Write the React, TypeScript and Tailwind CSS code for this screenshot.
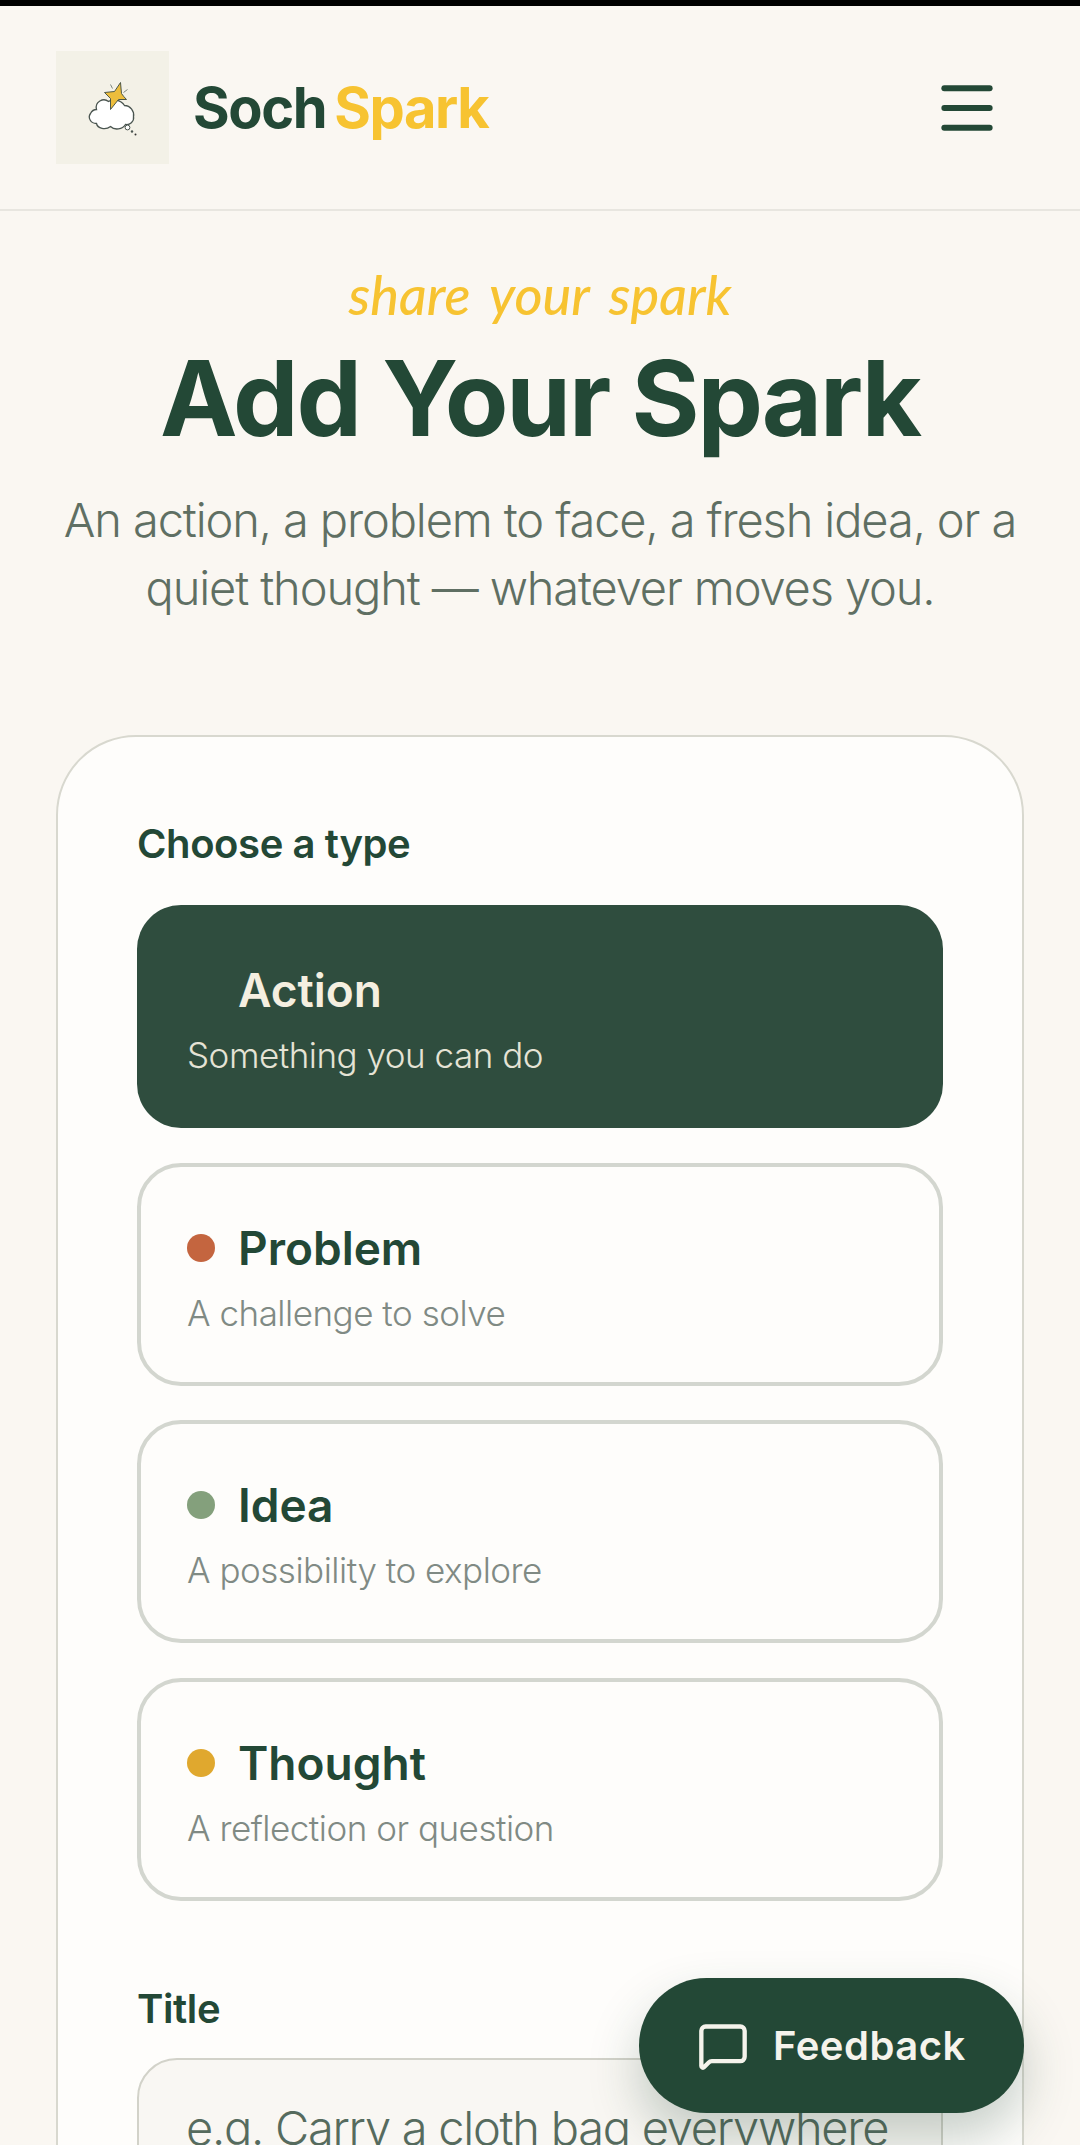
import { Menu, MessageSquare } from 'lucide-react';

const types = [
    { name: "Problem", hint: "A challenge to solve", dot: "bg-[#c4653f]" },
    { name: "Idea", hint: "A possibility to explore", dot: "bg-[#84a07c]" },
    { name: "Thought", hint: "A reflection or question", dot: "bg-[#e0a82e]" },
];

function Logo() {
    return (
        <div className="w-[113px] h-[113px] bg-[#f3f1e7] flex items-center justify-center shrink-0">
            <svg width="60" height="62" viewBox="82.5 75.5 60 62" fill="none">
                {/* cloud */}
                <path d="M96 108C94 100 103 96 108 100C112 97 120 98 124 104C130 104 134 110 133 115C134 120 129 124 125 123C122 128 114 129 110 125C105 129 97 127 96 122C90 122 87 116 90 112C91 110 93 108 96 108Z" fill="#fff" stroke="#4a5550" strokeWidth="1.3" />
                {/* star */}
                <path d="M120 81L121 92Q123 95 126 98L118 98L110 108L110 97L104 91L114 90Z" fill="#ecbd3c" stroke="#3b4a40" strokeWidth="0.9" strokeLinejoin="round" />
                <path d="M110 83l2 4M127 88l-4 3" stroke="#6f7a72" strokeWidth="0.9" />
                <circle cx="127" cy="126" r="2.4" fill="#fff" stroke="#4a5550" strokeWidth="1" />
                <circle cx="131.5" cy="130" r="1.2" fill="#4a5550" />
                <circle cx="135" cy="133" r="1" fill="#333" />
            </svg>
        </div>
    );
}

export default function App() {
    return (
        <div className="relative h-[2145px] overflow-hidden bg-[#faf7f2] font-['Inter',sans-serif] text-[#234836]">
            <div className="h-[6px] bg-black"></div>

            {/* Header */}
            <header className="h-[205px] px-14 flex items-center justify-between border-b-2 border-[#e8e6e0]">
                <div className="flex items-center gap-6">
                    <Logo />
                    <div className="text-[56px] font-bold tracking-[-0.025em] leading-none flex gap-2">
                        <span>Soch</span>
                        <span className="text-[#f7c331]">Spark</span>
                    </div>
                </div>
                <Menu className="w-[68px] h-[68px] mr-[23px]" strokeWidth={2.1} />
            </header>

            {/* Title */}
            <section className="px-14 text-center">
                <p className="mt-[52px] text-[54px] leading-[64px] italic font-medium [word-spacing:0.14em] text-[#f7c331] font-['Lato',cursive]">share your spark</p>
                <h1 className="mt-[15px] text-[104px] leading-[112px] font-bold tracking-[-0.021em]">Add Your Spark</h1>
                <p className="mt-[32px] text-[47px] leading-[68px] font-light tracking-[-0.024em] text-[#5f6f63]">
                    An action, a problem to face, a fresh idea, or a quiet thought — whatever moves you.
                </p>
            </section>

            {/* Form card */}
            <section className="mt-[113px] mx-14 h-[1500px] rounded-[80px] border-2 border-[#d8d8cf] bg-[#fefdfb] px-[79px] pt-[82px]">
                <h2 className="text-[40px] leading-[50px] font-semibold tracking-[-0.01em]">Choose a type</h2>
                <div className="mt-[36px] flex flex-col gap-[34.7px]">
                    <div className="h-[223px] rounded-[44px] bg-[#2f4d3e] px-[50px] pt-[57px]">
                        <div className="pl-[51px] text-[46px] leading-[56px] font-semibold text-[#f5efe0]">Action</div>
                        <div className="mt-[15px] text-[35px] leading-[44px] font-light tracking-[-0.014em] text-[#e5e3d5]">Something you can do</div>
                    </div>
                    {types.map((t) => (
                        <div key={t.name} className="h-[223px] rounded-[44px] border-4 border-[#d3d6cf] px-[46px] pt-[53px]">
                            <div className="flex items-center gap-[23px] text-[46px] leading-[56px] font-semibold">
                                <span className={`w-7 h-7 rounded-full ${t.dot}`}></span>
                                {t.name}
                            </div>
                            <div className="mt-[15px] text-[35px] leading-[44px] font-light tracking-[-0.014em] text-[#808a84]">{t.hint}</div>
                        </div>
                    ))}
                </div>
                <h2 className="mt-[83px] text-[40px] leading-[50px] font-semibold tracking-[-0.01em]">Title</h2>
                <div className="mt-[24px] h-[130px] rounded-[40px] border-2 border-[#d2d2c9] bg-[#f9f7f3] px-[47px] pt-[38px] text-[47px] leading-[60px] font-light tracking-[-0.027em] whitespace-nowrap overflow-hidden text-[#566b5e]">
                    e.g. Carry a cloth bag everywhere
                </div>
            </section>

            {/* Feedback pill */}
            <button className="absolute left-[639px] top-[1978px] w-[385px] h-[135px] rounded-full bg-[#234836] flex items-center pl-[58px] gap-[24px] text-[#f5f3ec] text-[40px] font-semibold tracking-[0.012em] shadow-[0_25px_50px_rgba(35,72,54,0.25)]">
                <MessageSquare className="w-[52px] h-[52px]" strokeWidth={2} />
                Feedback
            </button>
        </div>
    );
}
